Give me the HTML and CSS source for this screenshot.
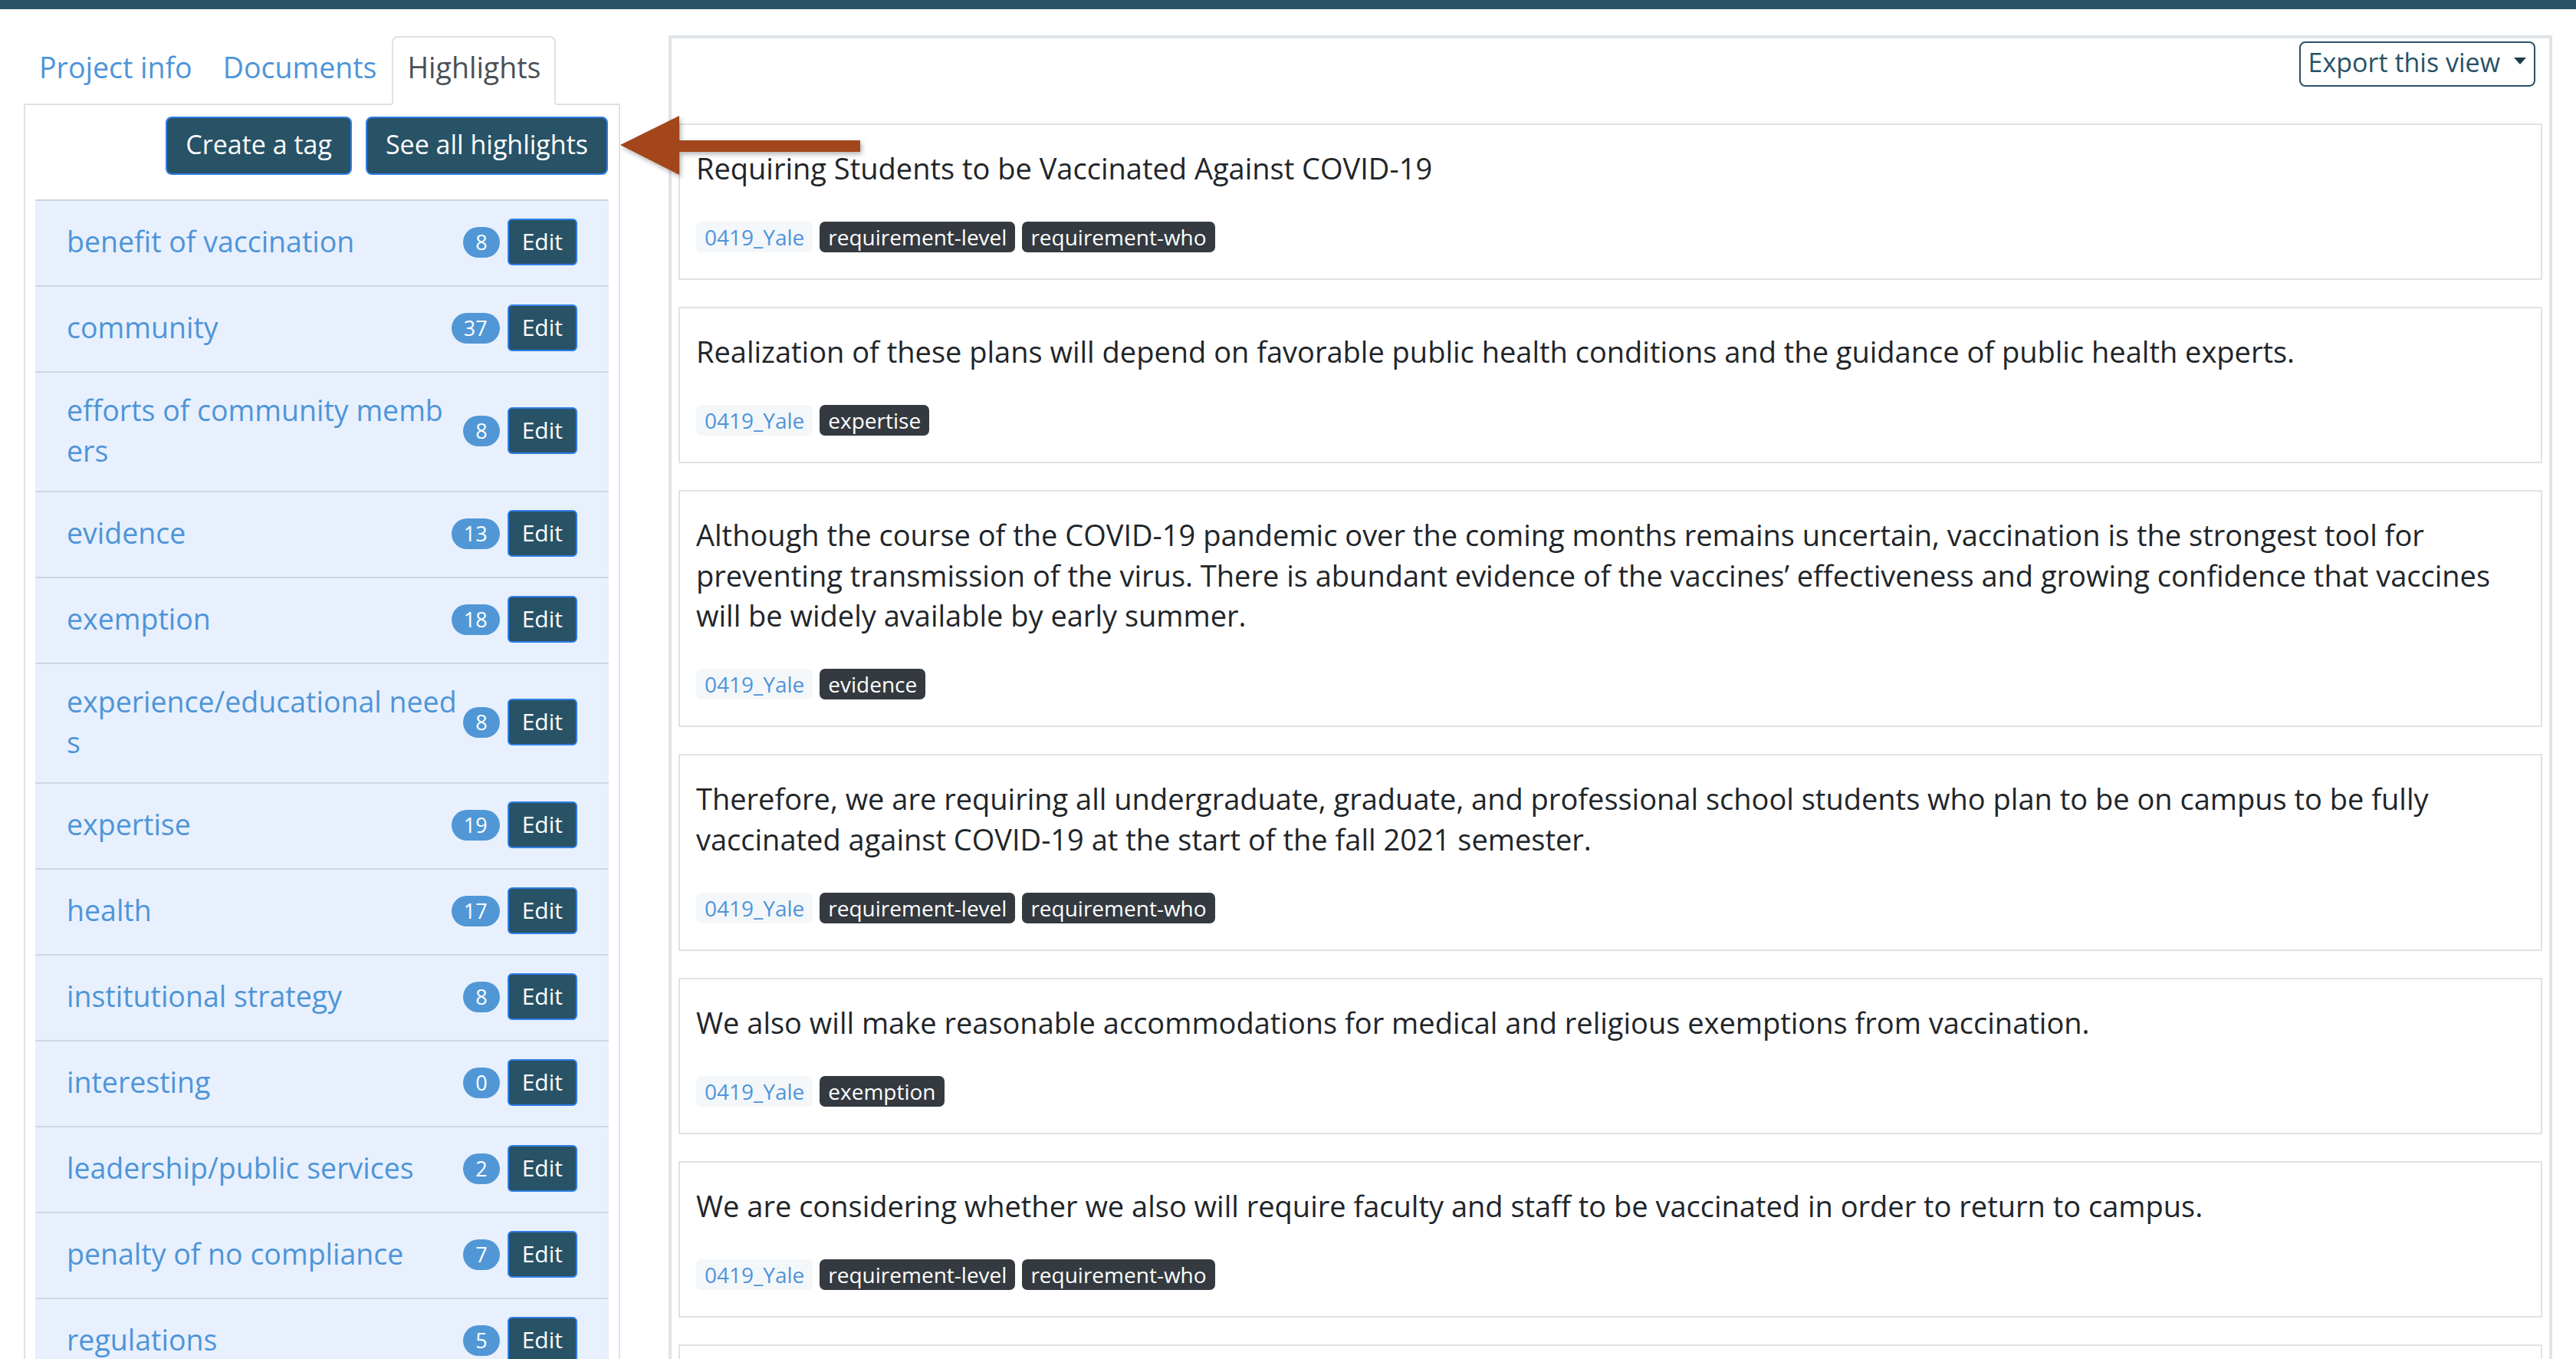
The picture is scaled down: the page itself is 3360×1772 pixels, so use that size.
FILE: index.html
```html
<!DOCTYPE html>
<html lang="en">
<head>
<meta charset="utf-8">
<title>Highlights</title>
<link rel="stylesheet" href="styles.css">
</head>
<body>
<div class="topbar"></div>
<div class="page">
  <aside class="sidebar">
    <nav class="tabs">
      <a class="tab" href="#">Project info</a>
      <a class="tab" href="#">Documents</a>
      <a class="tab active" href="#">Highlights</a>
    </nav>
    <div class="tab-panel">
      <div class="actions">
        <button class="btn">Create a tag</button>
        <button class="btn">See all highlights</button>
      </div>
      <ul class="tag-list">
        <li class="tag-row"><span class="tag-name">benefit of vaccination</span><span class="count">8</span><button class="btn btn-edit">Edit</button></li>
        <li class="tag-row"><span class="tag-name">community</span><span class="count">37</span><button class="btn btn-edit">Edit</button></li>
        <li class="tag-row"><span class="tag-name">efforts of community members</span><span class="count">8</span><button class="btn btn-edit">Edit</button></li>
        <li class="tag-row"><span class="tag-name">evidence</span><span class="count">13</span><button class="btn btn-edit">Edit</button></li>
        <li class="tag-row"><span class="tag-name">exemption</span><span class="count">18</span><button class="btn btn-edit">Edit</button></li>
        <li class="tag-row"><span class="tag-name">experience/educational needs</span><span class="count">8</span><button class="btn btn-edit">Edit</button></li>
        <li class="tag-row"><span class="tag-name">expertise</span><span class="count">19</span><button class="btn btn-edit">Edit</button></li>
        <li class="tag-row"><span class="tag-name">health</span><span class="count">17</span><button class="btn btn-edit">Edit</button></li>
        <li class="tag-row"><span class="tag-name">institutional strategy</span><span class="count">8</span><button class="btn btn-edit">Edit</button></li>
        <li class="tag-row"><span class="tag-name">interesting</span><span class="count">0</span><button class="btn btn-edit">Edit</button></li>
        <li class="tag-row"><span class="tag-name">leadership/public services</span><span class="count">2</span><button class="btn btn-edit">Edit</button></li>
        <li class="tag-row"><span class="tag-name">penalty of no compliance</span><span class="count">7</span><button class="btn btn-edit">Edit</button></li>
        <li class="tag-row"><span class="tag-name">regulations</span><span class="count">5</span><button class="btn btn-edit">Edit</button></li>
        <li class="tag-row"><span class="tag-name">requirement-level</span><span class="count">9</span><button class="btn btn-edit">Edit</button></li>
        <li class="tag-row"><span class="tag-name">requirement-who</span><span class="count">9</span><button class="btn btn-edit">Edit</button></li>
      </ul>
    </div>
  </aside>

  <main class="results">
    <div class="results-head">
      <button class="export">Export this view<span class="caret"></span></button>
    </div>

    <article class="hl-card">
      <p class="hl-text">Requiring Students to be Vaccinated Against COVID-19</p>
      <div class="hl-tags"><span class="pill pill-doc">0419_Yale</span><span class="pill pill-tag">requirement-level</span><span class="pill pill-tag">requirement-who</span></div>
    </article>

    <article class="hl-card">
      <p class="hl-text">Realization of these plans will depend on favorable public health conditions and the guidance of public health experts.</p>
      <div class="hl-tags"><span class="pill pill-doc">0419_Yale</span><span class="pill pill-tag">expertise</span></div>
    </article>

    <article class="hl-card">
      <p class="hl-text">Although the course of the COVID-19 pandemic over the coming months remains uncertain, vaccination is the strongest tool for preventing transmission of the virus. There is abundant evidence of the vaccines’ effectiveness and growing confidence that vaccines will be widely available by early summer.</p>
      <div class="hl-tags"><span class="pill pill-doc">0419_Yale</span><span class="pill pill-tag">evidence</span></div>
    </article>

    <article class="hl-card">
      <p class="hl-text">Therefore, we are requiring all undergraduate, graduate, and professional school students who plan to be on campus to be fully vaccinated against COVID-19 at the start of the fall 2021 semester.</p>
      <div class="hl-tags"><span class="pill pill-doc">0419_Yale</span><span class="pill pill-tag">requirement-level</span><span class="pill pill-tag">requirement-who</span></div>
    </article>

    <article class="hl-card">
      <p class="hl-text">We also will make reasonable accommodations for medical and religious exemptions from vaccination.</p>
      <div class="hl-tags"><span class="pill pill-doc">0419_Yale</span><span class="pill pill-tag">exemption</span></div>
    </article>

    <article class="hl-card">
      <p class="hl-text">We are considering whether we also will require faculty and staff to be vaccinated in order to return to campus.</p>
      <div class="hl-tags"><span class="pill pill-doc">0419_Yale</span><span class="pill pill-tag">requirement-level</span><span class="pill pill-tag">requirement-who</span></div>
    </article>

    <article class="hl-card">
      <p class="hl-text">Students will receive further information about how to submit proof of vaccination.</p>
      <div class="hl-tags"><span class="pill pill-doc">0419_Yale</span><span class="pill pill-tag">regulations</span></div>
    </article>
  </main>

  <svg class="callout-arrow" width="322" height="90" viewBox="0 0 322 90" aria-hidden="true">
    <polygon points="0,41 77,3 77,35 313,35 313,50 77,50 77,80" fill="#a3461b"/>
  </svg>
</div>
</body>
</html>
```

FILE: styles.css
```css
* { box-sizing: border-box; }

body {
  margin: 0;
  font-family: "Open Sans", "Liberation Sans", sans-serif;
  color: #212529;
  background: #fff;
}

.topbar {
  height: 12px;
  background: #285266;
}

.page {
  position: relative;
  display: flex;
  align-items: flex-start;
  gap: 63px;
  padding: 34px 31px 0;
}

/* ---------- left column ---------- */
.sidebar {
  width: 778px;
  flex: none;
  padding-top: 1px;
}

.tabs {
  display: flex;
}

.tab {
  display: block;
  font-size: 37.5px;
  line-height: 52px;
  padding: 13px 18px 21px;
  border: 2px solid transparent;
  border-radius: 8px 8px 0 0;
  margin-bottom: -2px;
  color: #4e95d8;
  text-decoration: none;
}

.tab.active {
  position: relative;
  z-index: 1;
  color: #495057;
  background: #fff;
  border-color: #dee2e6 #dee2e6 #fff;
}

.tab-panel {
  border: 2px solid #dee2e6;
  padding: 15px 13px;
}

.actions {
  display: flex;
  justify-content: flex-end;
  gap: 18px;
  margin: 0 1px 32px 0;
}

.btn {
  font-family: inherit;
  font-size: 34px;
  line-height: 48px;
  padding: 10px 24px 14px;
  color: #fff;
  background: #285266;
  border: 2px solid #2f7fe6;
  border-radius: 8px;
}

.tag-list {
  list-style: none;
  margin: 0;
  padding: 0;
}

.tag-row {
  display: flex;
  align-items: center;
  background: #e8f0fe;
  border-top: 2px solid #cfd6df;
  padding: 23px 41px 26px;
}

.tag-name {
  flex: 1;
  min-width: 0;
  margin-right: 8px;
  font-size: 37.5px;
  line-height: 52.5px;
  color: #4e95d8;
  word-break: break-all;
}

.count {
  flex: none;
  display: inline-flex;
  align-items: center;
  height: 40px;
  padding: 0 16px;
  margin-right: 10px;
  border-radius: 20px;
  background: #5197d6;
  color: #fff;
  font-size: 27px;
}

.btn-edit {
  flex: none;
  font-size: 30px;
  line-height: 45px;
  padding: 5px 17px 7px;
  border-radius: 6px;
}

/* ---------- right column ---------- */
.results {
  flex: 1;
  min-width: 0;
  border: 4px solid #e0e4e8;
  padding: 4px 9px;
}

.results-head {
  display: flex;
  justify-content: flex-end;
  padding-right: 9px;
  margin-bottom: 48px;
}

.export {
  display: flex;
  align-items: center;
  gap: 18px;
  font-family: inherit;
  font-size: 34px;
  line-height: 51px;
  padding: 0 10px 4px;
  color: #285266;
  background: #fff;
  border: 2px solid #285266;
  border-radius: 8px;
}

.caret {
  width: 0;
  height: 0;
  margin-top: -4px;
  border-left: 8px solid transparent;
  border-right: 8px solid transparent;
  border-top: 9px solid #1f3b4a;
}

.hl-card {
  border: 2px solid #e2e2e2;
  padding: 30px 21px 34px;
  margin-bottom: 35px;
}

.hl-text {
  margin: 0 0 43.5px;
  font-size: 38px;
  line-height: 52.5px;
}

.hl-tags {
  display: flex;
  gap: 9px;
}

.pill {
  display: inline-flex;
  align-items: center;
  height: 40px;
  padding: 0 11px;
  border-radius: 7px;
  font-size: 28px;
}

.pill-doc {
  background: #f4f7fa;
  color: #4e95d8;
}

.pill-tag {
  background: #343a40;
  color: #fff;
}

.callout-arrow {
  position: absolute;
  left: 809px;
  top: 136px;
  filter: drop-shadow(2px 3px 3px rgba(0, 0, 0, 0.3));
}
```
